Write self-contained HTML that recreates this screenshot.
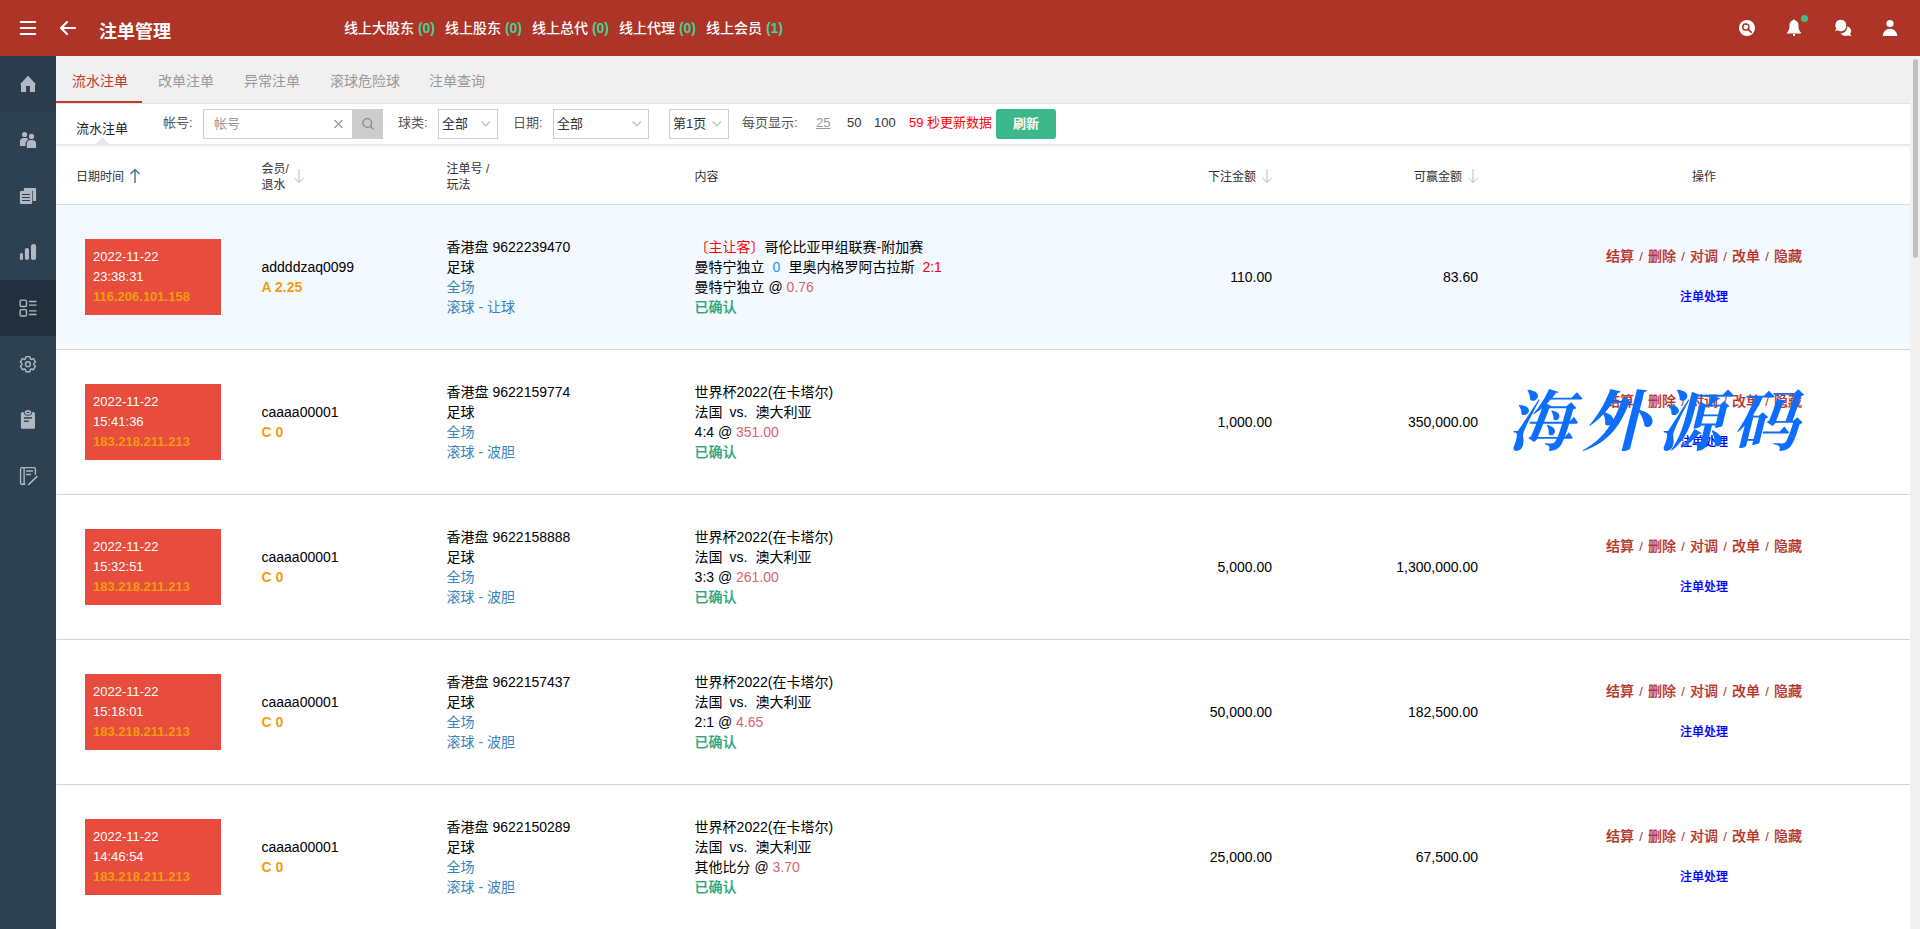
<!DOCTYPE html>
<html lang="zh-CN">
<head>
<meta charset="utf-8">
<title>注单管理</title>
<style>
*{box-sizing:border-box;margin:0;padding:0}
html,body{width:1920px;height:929px;overflow:hidden;background:#fff}
body{font-family:"Liberation Sans","Noto Sans CJK SC",sans-serif;font-size:14px;color:#000;position:relative}
i{font-style:normal}
#hdr{position:absolute;left:0;top:0;width:1920px;height:56px;background:#ae3428}
#hdr .title{position:absolute;left:99px;top:19px;font-size:18px;line-height:26px;font-weight:bold;color:#fff;white-space:nowrap}
#hdr .online{position:absolute;left:344px;top:17px;line-height:22px;font-size:14px;color:#fff;white-space:nowrap;font-weight:500}
#hdr .online span{display:inline-block;position:absolute;top:0;white-space:nowrap}
#hdr .online em{font-style:normal;color:#45d193;font-weight:bold}
#hdr svg{position:absolute}
#side{position:absolute;left:0;top:56px;width:56px;height:873px;background:#2e4150}
#side .first{position:absolute;left:0;top:0;width:56px;height:56px;background:#2b3d4c}
#side .act{position:absolute;left:0;top:224px;width:56px;height:56px;background:#222f3d}
#side svg{position:absolute;left:0;top:0}
#tabs{position:absolute;left:56px;top:56px;width:1854px;height:48px;background:#f0f0f0;border-bottom:1px solid #e2e2e2}
#tabs span{position:absolute;top:14px;font-size:14px;line-height:22px;color:#999;white-space:nowrap}
#tabs span.on{color:#c0392b}
#tabs .bar{position:absolute;left:0;top:45px;width:86px;height:2px;background:#c0392b}
#filter{position:absolute;left:56px;top:104px;width:1854px;height:41px;background:#fff;font-size:13px;color:#333}
#fshadow{position:absolute;left:56px;top:144px;width:1854px;height:4px;background:linear-gradient(#e4e4e4,#f6f6f6 60%,#fff)}
#filter>*{position:absolute;white-space:nowrap}
#filter .lab{top:9px;line-height:20px;color:#555}
#filter .box{top:5px;height:30px;border:1px solid #ccc;background:#fff;line-height:28px;color:#333;font-size:13px}
#filter .box svg{position:absolute}
#thead{position:absolute;left:56px;top:148px;width:1854px;height:57px;background:#fff;border-bottom:1px solid #ddd;font-size:12px;color:#333}
#thead>*{position:absolute;white-space:nowrap;line-height:16px;margin-top:1px}
#thead>svg{margin-top:0}
#thead svg{position:absolute}
.row{position:absolute;left:56px;width:1854px;height:145px;border-bottom:1px solid #d4d4d4;background:#fff;font-size:14px;line-height:20px}
.row.hov{background:#f3f9fe}
.row>div{position:absolute;white-space:nowrap}
.dt{left:29px;top:34px;width:136px;height:76px;background:#e74c3c;color:#fff;font-size:13px;padding:8px 8px}
.dt .ip{color:#f39c12;font-weight:bold}
.c2{left:205.5px;top:52px}
.c2 .lv{color:#f39c12;font-weight:bold;font-size:14px}
.c3{left:390.6px;top:32px}
.bl{color:#3b83bd}
.c4{left:638.6px;top:32px}
.r1{color:#f00}.b1{color:#1e90ff}
.sc{padding:0 8px}.sc.l{padding-right:0}
.vs{padding:0 8px 0 7px}
.od{color:#d9636a}
.ok{color:#2fa67a;font-weight:500;-webkit-text-stroke:0.200px #2fa67a}
.c5{right:638px;top:62px;text-align:right}
.c6{right:432px;top:62px;text-align:right}
.c7{left:1442px;width:412px;top:0;height:144px;text-align:center}
.ops{position:absolute;left:0;width:412px;top:41px;color:#b8342a;font-size:14px}
.ops b{font-weight:500;-webkit-text-stroke:0.200px #b8342a}
.ops i{display:inline-block;width:14px;text-align:center;font-size:13px;font-weight:normal;color:#b03020}
.proc{position:absolute;left:0;width:412px;top:82px;font-size:12px;font-weight:500;color:#00f;-webkit-text-stroke:0.200px #00f}
#sb{position:absolute;left:1910px;top:56px;width:10px;height:873px;background:#f1f1f1}
#sb div{position:absolute;left:3px;top:2.500px;width:5px;height:199px;border-radius:2.500px;background:#c1c1c1}
#wm{position:absolute;left:1503px;top:372px;font-family:"Noto Serif CJK SC","Noto Sans CJK SC",serif;font-weight:700;font-size:66px;line-height:90px;color:#0d6efd;white-space:nowrap;letter-spacing:9px;transform:skewX(-14deg);transform-origin:left bottom}
</style>
</head>
<body>
<div id="hdr">
<svg width="56" height="56" style="left:0;top:0" viewBox="0 0 56 56"><path d="M20.700 22h14.600M20.700 28h14.600M20.700 34h14.600" stroke="#fff" stroke-width="2" stroke-linecap="round"/></svg>
<svg width="30" height="30" style="left:53px;top:13px" viewBox="0 0 30 30"><path d="M22 15H8.5M14 9l-6 6 6 6" fill="none" stroke="#fff" stroke-width="2.2" stroke-linecap="round" stroke-linejoin="round"/></svg>
<div class="title">注单管理</div>
<div class="online"><span style="left:0">线上大股东 <em>(0)</em></span><span style="left:101px">线上股东 <em>(0)</em></span><span style="left:188px">线上总代 <em>(0)</em></span><span style="left:275px">线上代理 <em>(0)</em></span><span style="left:362px">线上会员 <em>(1)</em></span></div>
<svg width="20" height="20" style="left:1737px;top:18px" viewBox="0 0 20 20"><circle cx="10" cy="10" r="8" fill="#fff"/><circle cx="8.8" cy="9" r="3.1" fill="none" stroke="#ae3428" stroke-width="1.5"/><path d="M11.100 11.300l3 2.800" stroke="#ae3428" stroke-width="1.800" stroke-linecap="round"/></svg>
<svg width="28" height="24" style="left:1784px;top:14px" viewBox="0 0 28 24"><path d="M10 5.6c1.2 0 1 .8 1.6 1 1.8.7 2.9 2.300 2.900 4.800 0 3.200 .5 5.400 2.500 7.100 .3.300.200.900-.4.900H3.400c-.6 0-.7-.6-.4-.9 2-1.700 2.500-3.900 2.500-7.100 0-2.500 1.100-4.100 2.900-4.800C9 6.400 8.800 5.600 10 5.600z" fill="#fff"/><rect x="9" y="20" width="2" height="2" fill="#fff"/><circle cx="20.500" cy="4.500" r="3.600" fill="#3dbb8f"/></svg>
<svg width="24" height="24" style="left:1832px;top:16px" viewBox="0 0 24 24"><path d="M8.750 3.700a5.750 5.750 0 1 1-3.300 10.500L3 15.300l1.300-2.500A5.750 5.750 0 0 1 8.750 3.700z" fill="#fff"/><path d="M15.300 10.200c2.300.900 3.900 2.700 3.900 4.800 0 1.100-.4 2.100-1.100 2.900L19.400 20.200l-3.100-.8c-.8.300-1.600.4-2.400.4-2.300 0-4.300-1-5.300-2.600 3.700.2 6.900-2.700 6.700-7z" fill="#fff"/></svg>
<svg width="20" height="22" style="left:1880px;top:17px" viewBox="0 0 20 22"><circle cx="10" cy="6.500" r="3.600" fill="#fff"/><path d="M2.750 19c0-4 3.200-7.250 7.250-7.250S17.250 15 17.250 19z" fill="#fff"/></svg>
</div>

<div id="side">
<div class="first"></div><div class="act"></div>
<svg width="56" height="460" viewBox="0 0 56 460" fill="#b0b8c1">
<!-- home (center y=28) -->
<path d="M28 19.700L19.800 28.600H21V36H26.100V30H29.900V36H35V28.600H36.200z"/>
<!-- users (center y=84) -->
<circle cx="24.600" cy="78.500" r="2.600"/><path d="M19.900 89.500V86.100a4 4 0 0 1 4-4h1.600c1.400 0 2.400.500 3 1.300-1.800.800-3 2.400-3 4.400V90H20.400a.5.5 0 0 1-.5-.5z"/>
<circle cx="31.500" cy="80.400" r="2.600"/><path d="M26.800 91.600V88a4 4 0 0 1 4-4h1.300a4 4 0 0 1 4 4v3.600a.5.5 0 0 1-.5.500H27.300a.5.5 0 0 1-.5-.5z"/>
<!-- copy (center y=140) -->
<path d="M23.900 131.900H36.100V145H32.900V135H23.900z"/><path d="M20.900 135H31.200a1 1 0 0 1 1 1V147.100a1 1 0 0 1-1 1H20.900a1 1 0 0 1-1-1V136a1 1 0 0 1 1-1zM22 138v1h7.900v-1zM22 141v1h7.900v-1zM22 144v1h7.900v-1z" fill-rule="evenodd"/>
<!-- bars (center y=196) -->
<rect x="19.900" y="196.900" width="3.100" height="7.200" rx="1.550"/><rect x="24.900" y="191.900" width="4.100" height="12.200" rx="2"/><rect x="31" y="187.900" width="5.100" height="16.200" rx="2.500"/>
<!-- list (center y=252) -->
<g fill="none" stroke="#b0b8c1" stroke-width="1.400"><rect x="20.100" y="244.100" width="6.400" height="6.400" rx="1.300"/><rect x="20.100" y="253.600" width="6.400" height="6.400" rx="1.300"/><path d="M29 245.500h7.500M29 249.100h7.500M29 254.900h7.500M29 258.500h7.500"/></g>
<!-- gear (center y=308) -->
<g fill="none" stroke="#b0b8c1" stroke-width="1.400" stroke-linejoin="round"><path id="gear" d="M25.50 302.81L25.88 300.67L29.92 300.67L30.30 302.81L31.37 303.43L33.42 302.68L35.43 306.18L33.77 307.58L33.77 308.82L35.43 310.22L33.42 313.72L31.37 312.97L30.30 313.59L29.92 315.73L25.88 315.73L25.50 313.59L24.43 312.97L22.38 313.72L20.37 310.22L22.03 308.82L22.03 307.58L20.37 306.18L22.38 302.68L24.43 303.43z"/><circle cx="27.900" cy="308.200" r="2.400"/></g>
<!-- clipboard (center y=364) -->
<rect x="20.900" y="355.900" width="14.100" height="16.900" rx="1.600"/>
<rect x="24.200" y="353.700" width="7.500" height="5.500" rx="2.700" fill="#b0b8c1" stroke="#2e4150" stroke-width="1"/>
<rect x="26.300" y="355.900" width="3.400" height="1.100" rx=".55" fill="#2e4150"/>
<rect x="24" y="361.200" width="8" height="1.500" fill="#2e4150"/><rect x="24" y="364.500" width="4.900" height="1.400" fill="#2e4150"/>
<!-- notebook (center y=420) -->
<g fill="none" stroke="#b0b8c1" stroke-width="1.400"><path d="M25.400 428.300H22a1.400 1.400 0 0 1-1.400-1.400V413a1.400 1.400 0 0 1 1.400-1.400H34a1.400 1.400 0 0 1 1.400 1.400V418.800M24.100 411.600V428.300M26.100 415h6.900M26.100 418.500h4.900"/><path d="M37.300 420.200L28.200 429" stroke-width="1.600"/></g>
</svg>
</div>

<div id="tabs">
<span class="on" style="left:16px">流水注单</span><span style="left:102px">改单注单</span><span style="left:188px">异常注单</span><span style="left:274px">滚球危险球</span><span style="left:373px">注单查询</span>
<div class="bar"></div>
</div>

<div id="filter">
<div class="lab" style="left:20px;top:15px;color:#222;font-size:13px">流水注单</div>
<svg width="13" height="7" style="left:39.500px;top:33px" viewBox="0 0 13 7"><path d="M0 7L6.500 0l6.500 7z" fill="#e6e6e6"/></svg>
<div class="lab" style="left:107px">帐号:</div>
<div class="box" style="left:147px;width:150px;padding-left:10px;color:#999">帐号<svg width="12" height="12" style="left:128px;top:8px" viewBox="0 0 12 12"><path d="M2.500 2l8 8M10.500 2l-8 8" stroke="#999" stroke-width="1.200"/></svg></div>
<div class="box" style="left:296px;width:31px;background:#ccc;border-color:#ccc"><svg width="16" height="16" style="left:7px;top:6px" viewBox="0 0 16 16"><circle cx="7.300" cy="7" r="4.300" fill="none" stroke="#888" stroke-width="1.300"/><path d="M10.400 10.200l3.200 3.200" stroke="#888" stroke-width="1.300"/></svg></div>
<div class="lab" style="left:342px">球类:</div>
<div class="box" style="left:382px;width:60px;padding-left:3px">全部<svg width="10" height="6" style="left:42px;top:11px" viewBox="0 0 10 6"><path d="M.6.600l4.200 4.200 4.200-4.200" fill="none" stroke="#c2c2c2" stroke-width="1.400"/></svg></div>
<div class="lab" style="left:457px">日期:</div>
<div class="box" style="left:497px;width:96px;padding-left:3px">全部<svg width="10" height="6" style="left:78px;top:11px" viewBox="0 0 10 6"><path d="M.6.600l4.200 4.200 4.200-4.200" fill="none" stroke="#c2c2c2" stroke-width="1.400"/></svg></div>
<div class="box" style="left:613px;width:60px;padding-left:3px">第1页<svg width="10" height="6" style="left:42px;top:11px" viewBox="0 0 10 6"><path d="M.6.600l4.200 4.200 4.200-4.200" fill="none" stroke="#c2c2c2" stroke-width="1.400"/></svg></div>
<div class="lab" style="left:686px">每页显示:</div>
<div class="lab" style="left:760px;color:#999;text-decoration:underline">25</div>
<div class="lab" style="left:791px;color:#333">50</div>
<div class="lab" style="left:818px;color:#333">100</div>
<div class="lab" style="left:853px;color:#f00">59 秒更新数据</div>
<div style="left:940px;top:5px;width:60px;height:30px;border-radius:3px;background:#3cb88c;color:#fff;font-weight:bold;font-size:13px;line-height:30px;text-align:center">刷新</div>
</div>
<div id="fshadow"></div>

<div id="thead">
<div style="left:20px;top:20px">日期时间</div>
<svg width="12" height="16" style="left:73px;top:20px" viewBox="0 0 12 16"><path d="M6 15V1.500M1.500 6L6 1.500l4.500 4.500" fill="none" stroke="#4b7d92" stroke-width="1.500"/></svg>
<div style="left:205.500px;top:12px">会员/<br>退水</div>
<svg width="12" height="16" style="left:237px;top:20px" viewBox="0 0 12 16"><path d="M6 1V14.500M1.500 10L6 14.500l4.500-4.500" fill="none" stroke="#bbb" stroke-width="1"/></svg>
<div style="left:390.600px;top:12px">注单号 /<br>玩法</div>
<div style="left:638.600px;top:20px">内容</div>
<div style="left:1152px;top:20px">下注金额</div>
<svg width="12" height="16" style="left:1205px;top:20px" viewBox="0 0 12 16"><path d="M6 1V14.500M1.500 10L6 14.500l4.500-4.500" fill="none" stroke="#bbb" stroke-width="1"/></svg>
<div style="left:1358px;top:20px">可赢金额</div>
<svg width="12" height="16" style="left:1411px;top:20px" viewBox="0 0 12 16"><path d="M6 1V14.500M1.500 10L6 14.500l4.500-4.500" fill="none" stroke="#bbb" stroke-width="1"/></svg>
<div style="left:1636px;top:20px">操作</div>
</div>

<div class="row hov" style="top:205px">
<div class="dt"><div>2022-11-22</div><div>23:38:31</div><div class="ip">116.206.101.158</div></div>
<div class="c2"><div>addddzaq0099</div><div class="lv">A 2.25</div></div>
<div class="c3"><div>香港盘 9622239470</div><div>足球</div><div class="bl">全场</div><div class="bl">滚球 - 让球</div></div>
<div class="c4"><div><span class="r1">〔主让客〕</span>哥伦比亚甲组联赛-附加赛</div><div>曼特宁独立<span class="sc b1">0</span>里奥内格罗阿古拉斯<span class="sc r1 l">2:1</span></div><div>曼特宁独立 @ <span class="od">0.76</span></div><div class="ok">已确认</div></div>
<div class="c5">110.00</div>
<div class="c6">83.60</div>
<div class="c7"><div class="ops"><b>结算</b><i>/</i><b>删除</b><i>/</i><b>对调</b><i>/</i><b>改单</b><i>/</i><b>隐藏</b></div><div class="proc">注单处理</div></div>
</div>
<div class="row" style="top:350px">
<div class="dt"><div>2022-11-22</div><div>15:41:36</div><div class="ip">183.218.211.213</div></div>
<div class="c2"><div>caaaa00001</div><div class="lv">C 0</div></div>
<div class="c3"><div>香港盘 9622159774</div><div>足球</div><div class="bl">全场</div><div class="bl">滚球 - 波胆</div></div>
<div class="c4"><div>世界杯2022(在卡塔尔)</div><div>法国<span class="vs">vs.</span>澳大利亚</div><div>4:4 @ <span class="od">351.00</span></div><div class="ok">已确认</div></div>
<div class="c5">1,000.00</div>
<div class="c6">350,000.00</div>
<div class="c7"><div class="ops"><b>结算</b><i>/</i><b>删除</b><i>/</i><b>对调</b><i>/</i><b>改单</b><i>/</i><b>隐藏</b></div><div class="proc">注单处理</div></div>
</div>
<div class="row" style="top:495px">
<div class="dt"><div>2022-11-22</div><div>15:32:51</div><div class="ip">183.218.211.213</div></div>
<div class="c2"><div>caaaa00001</div><div class="lv">C 0</div></div>
<div class="c3"><div>香港盘 9622158888</div><div>足球</div><div class="bl">全场</div><div class="bl">滚球 - 波胆</div></div>
<div class="c4"><div>世界杯2022(在卡塔尔)</div><div>法国<span class="vs">vs.</span>澳大利亚</div><div>3:3 @ <span class="od">261.00</span></div><div class="ok">已确认</div></div>
<div class="c5">5,000.00</div>
<div class="c6">1,300,000.00</div>
<div class="c7"><div class="ops"><b>结算</b><i>/</i><b>删除</b><i>/</i><b>对调</b><i>/</i><b>改单</b><i>/</i><b>隐藏</b></div><div class="proc">注单处理</div></div>
</div>
<div class="row" style="top:640px">
<div class="dt"><div>2022-11-22</div><div>15:18:01</div><div class="ip">183.218.211.213</div></div>
<div class="c2"><div>caaaa00001</div><div class="lv">C 0</div></div>
<div class="c3"><div>香港盘 9622157437</div><div>足球</div><div class="bl">全场</div><div class="bl">滚球 - 波胆</div></div>
<div class="c4"><div>世界杯2022(在卡塔尔)</div><div>法国<span class="vs">vs.</span>澳大利亚</div><div>2:1 @ <span class="od">4.65</span></div><div class="ok">已确认</div></div>
<div class="c5">50,000.00</div>
<div class="c6">182,500.00</div>
<div class="c7"><div class="ops"><b>结算</b><i>/</i><b>删除</b><i>/</i><b>对调</b><i>/</i><b>改单</b><i>/</i><b>隐藏</b></div><div class="proc">注单处理</div></div>
</div>
<div class="row" style="top:785px">
<div class="dt"><div>2022-11-22</div><div>14:46:54</div><div class="ip">183.218.211.213</div></div>
<div class="c2"><div>caaaa00001</div><div class="lv">C 0</div></div>
<div class="c3"><div>香港盘 9622150289</div><div>足球</div><div class="bl">全场</div><div class="bl">滚球 - 波胆</div></div>
<div class="c4"><div>世界杯2022(在卡塔尔)</div><div>法国<span class="vs">vs.</span>澳大利亚</div><div>其他比分 @ <span class="od">3.70</span></div><div class="ok">已确认</div></div>
<div class="c5">25,000.00</div>
<div class="c6">67,500.00</div>
<div class="c7"><div class="ops"><b>结算</b><i>/</i><b>删除</b><i>/</i><b>对调</b><i>/</i><b>改单</b><i>/</i><b>隐藏</b></div><div class="proc">注单处理</div></div>
</div>

<div id="sb"><div></div></div>
<div id="wm">海外源码</div>
</body>
</html>
